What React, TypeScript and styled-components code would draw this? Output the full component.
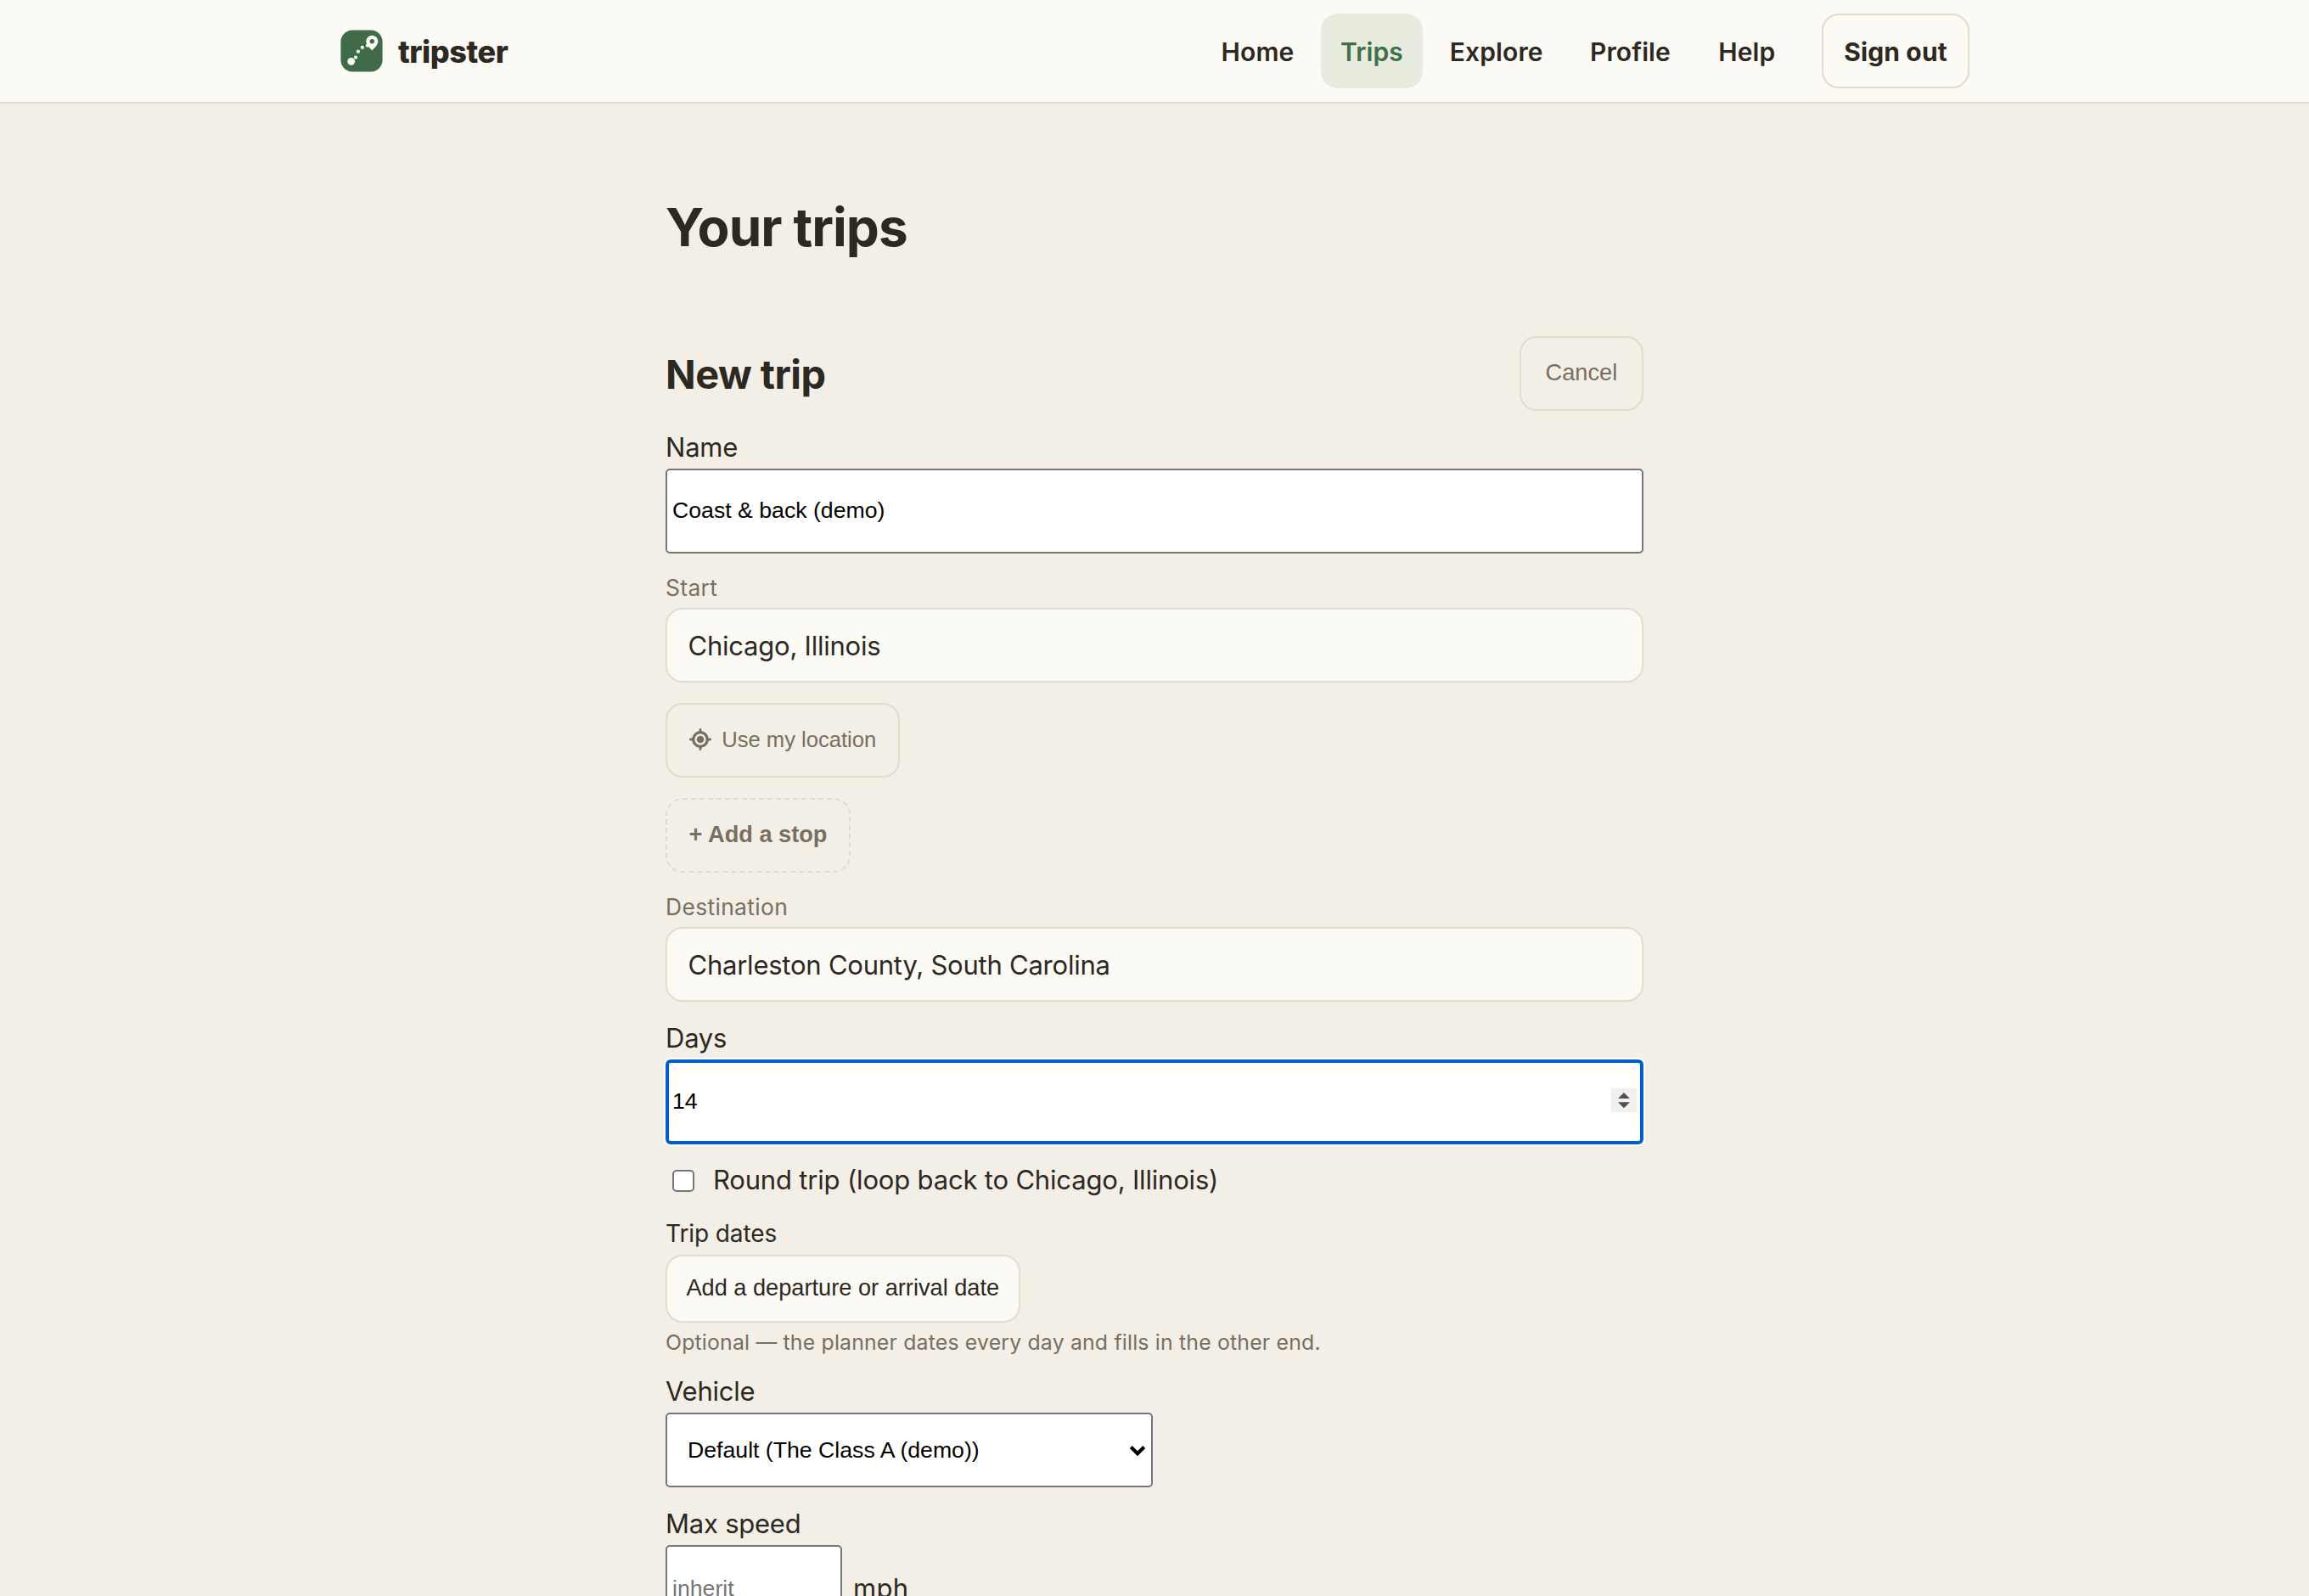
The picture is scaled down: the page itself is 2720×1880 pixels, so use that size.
import styled, { createGlobalStyle, css } from "styled-components";

const GlobalStyle = createGlobalStyle`
  * {
    box-sizing: border-box;
  }

  body {
    margin: 0;
    height: 1880px;
    overflow: hidden;
    background: #f3eee6;
    color: #2c2822;
    font-family: "Inter", sans-serif;
    font-size: 31px;
    letter-spacing: -0.23px;
  }
`;

const Header = styled.header`
  height: 122px;
  background: #fcfaf5;
  border-bottom: 2px solid #e3dccb;
`;

const HeaderInner = styled.div`
  width: 1920px;
  height: 120px;
  margin: 0 auto;
  display: flex;
  align-items: center;
  justify-content: space-between;
`;

const Brand = styled.div`
  display: flex;
  align-items: center;
  gap: 18px;
  padding-left: 1px;
  font-weight: 800;
  font-size: 36px;
  letter-spacing: -0.45px;
`;

const BrandName = styled.span`
  padding-top: 2px;
`;

const Nav = styled.nav`
  display: flex;
  gap: 8px;
  font-size: 30px;
  font-weight: 600;
  letter-spacing: 0.1px;
`;

const NavLink = styled.a<{ $width: number; $active?: boolean }>`
  display: flex;
  align-items: center;
  justify-content: center;
  width: ${({ $width }) => $width}px;
  height: 88px;
  padding-top: 2px;
  border-radius: 20px;
  color: ${({ $active }) => ($active ? "#3f6f4b" : "inherit")};
  background: ${({ $active }) => ($active ? "#e7ecdf" : "transparent")};
`;

const SignOut = styled.button`
  width: 174px;
  height: 88px;
  margin-left: 22px;
  padding: 2px 0 0;
  border: 2px solid #e3dccb;
  border-radius: 20px;
  background: transparent;
  color: inherit;
  font: inherit;
  font-weight: 700;
  letter-spacing: 0.13px;
`;

const Main = styled.main`
  width: 1152px;
  margin: 0 auto;
  padding-top: 108px;
`;

const Title = styled.h1`
  margin: 0 0 90px;
  font-size: 62px;
  line-height: 76px;
  letter-spacing: -0.93px;
`;

const Form = styled.form`
  display: flex;
  flex-direction: column;
  align-items: flex-start;
  gap: 24px;
`;

const FormHeader = styled.div`
  width: 100%;
  display: flex;
  align-items: center;
  justify-content: space-between;
`;

const FormTitle = styled.h2`
  margin: 2px 0 0;
  font-size: 46.8px;
  line-height: 56px;
  letter-spacing: -0.5px;
`;

const Field = styled.div`
  width: 100%;
`;

const Label = styled.div`
  height: 44px;
  line-height: 37.4px;
`;

const MutedLabel = styled.div`
  height: 40px;
  color: #776f60;
  font-size: 26.4px;
  line-height: 32.6px;
  letter-spacing: 0.35px;
`;

const DatesLabel = styled.div`
  height: 44px;
  font-size: 28px;
  line-height: 38px;
  letter-spacing: -0.1px;
`;

const control = css`
  font-family: "Liberation Sans", sans-serif;
  letter-spacing: 0;
`;

const NativeInput = styled.input<{ $width?: number }>`
  ${control}
  display: block;
  width: ${({ $width }) => ($width ? `${$width}px` : "100%")};
  height: 100px;
  padding: 0 6px 1px;
  border: 2px solid #767676;
  border-radius: 5px;
  background: #fff;
  color: #000;
  font-size: 26.67px;
  outline: none;

  &::placeholder {
    color: #757575;
  }
`;

const SpeedInput = styled(NativeInput)`
  padding: 2px 6px 0;
`;

const NumberInput = styled.div`
  ${control}
  display: flex;
  align-items: center;
  justify-content: space-between;
  height: 100px;
  padding: 0 4px;
  border: 4px solid #005fcc;
  border-radius: 6px;
  background: #fff;
  box-shadow: 0 0 0 2px #fff;
  color: #000;
  font-size: 26.67px;
`;

const NumberValue = styled.span`
  padding-bottom: 2px;
`;

const Spinner = styled.span`
  display: flex;
  width: 30px;
  height: 28px;
  margin-bottom: 4px;
  background: #f0f0f0;
`;

const PlaceInput = styled.input`
  display: block;
  width: 100%;
  height: 88px;
  padding: 0 24px 0 24.5px;
  border: 2px solid #e3dccb;
  border-radius: 20px;
  background: #fcfaf5;
  color: inherit;
  font: inherit;
  letter-spacing: inherit;
  outline: none;
`;

const GhostButton = styled.button<{ $size?: number; $pad?: number }>`
  ${control}
  display: flex;
  align-items: center;
  gap: 12.6px;
  height: 88px;
  padding: 0 ${({ $pad = 25.6 }) => $pad}px 2px;
  border: 2px solid #e3dccb;
  border-radius: 20px;
  background: transparent;
  color: #776f60;
  font-size: ${({ $size = 27.2 }) => $size}px;
`;

const AddStop = styled(GhostButton)`
  border-style: dashed;
  font-weight: 700;
`;

const DateButton = styled(GhostButton)`
  height: 80px;
  padding: 0 22.4px 2px;
  background: #fcfaf5;
  color: #2c2822;
`;

const CheckRow = styled.label`
  display: flex;
  align-items: center;
  gap: 22px;
  height: 38px;
  padding-left: 8px;
  line-height: 36px;
  letter-spacing: -0.18px;
`;

const CheckText = styled.span`
  padding-bottom: 2px;
`;

const Checkbox = styled.span`
  width: 26px;
  height: 26px;
  border: 2px solid #767676;
  border-radius: 5px;
  background: #fff;
`;

const Hint = styled.p`
  margin: 0;
  padding-top: 8px;
  color: #776f60;
  font-size: 24.8px;
  line-height: 30px;
  letter-spacing: 0.19px;
`;

const Select = styled.div`
  ${control}
  display: flex;
  align-items: center;
  justify-content: space-between;
  width: 574px;
  height: 88px;
  padding: 1px 6px 0 24px;
  border: 2px solid #767676;
  border-radius: 5px;
  background: #fff;
  color: #000;
  font-size: 26.67px;
`;

const SpeedRow = styled.div`
  display: flex;
  align-items: center;
  gap: 13px;
  letter-spacing: 0.3px;
`;

function Logo() {
  return (
    <svg width="50" height="50" viewBox="0 0 50 50">
      <rect x="0.4" y="0.4" width="49.2" height="49.2" rx="14" fill="#3f6b49" />
      <g fill="#fcfaf5">
        <circle cx="12.7" cy="37.3" r="4.4" />
        <circle cx="18" cy="32.7" r="2.1" />
        <circle cx="20.9" cy="25.7" r="2.1" />
        <circle cx="25.8" cy="20.9" r="2.1" />
        <circle cx="32" cy="18.6" r="2.1" />
        <path d="M37.3 24.4C34.6 21.4 30.3 18 30.3 13.7a7 7 0 0 1 14 0c0 4.3-4.3 7.7-7 10.7z" />
      </g>
      <circle cx="37.3" cy="13.7" r="2.7" fill="#3f6b49" />
    </svg>
  );
}

function LocateIcon() {
  return (
    <svg width="26" height="26" viewBox="0 0 26 26" fill="none" stroke="currentColor" strokeLinecap="round">
      <circle cx="13" cy="13" r="8.3" strokeWidth="3.3" />
      <circle cx="13" cy="13" r="4.3" fill="currentColor" stroke="none" />
      <path d="M13 1.4v3.4M13 21.2v3.4M1.4 13h3.4M21.2 13h3.4" strokeWidth="2.8" />
    </svg>
  );
}

function SpinnerArrows() {
  return (
    <svg width="30" height="28" viewBox="0 0 30 28" fill="#505050">
      <path d="M8 12 15 5l7 7zM8 16.3h14l-7 7z" />
    </svg>
  );
}

function Chevron() {
  return (
    <svg width="20" height="14" viewBox="0 0 20 14" fill="none" stroke="#000" strokeWidth="4.2">
      <path d="M2.3 2.6 10 10.2l7.7-7.6" />
    </svg>
  );
}

const links = [
  { name: "Home", width: 133 },
  { name: "Trips", width: 120, active: true },
  { name: "Explore", width: 157.5 },
  { name: "Profile", width: 142 },
  { name: "Help", width: 116.5 },
];

export default function App() {
  return (
    <>
      <GlobalStyle />
      <Header>
        <HeaderInner>
          <Brand>
            <Logo />
            <BrandName>tripster</BrandName>
          </Brand>
          <Nav>
            {links.map((link) => (
              <NavLink key={link.name} $width={link.width} $active={link.active}>
                {link.name}
              </NavLink>
            ))}
            <SignOut>Sign out</SignOut>
          </Nav>
        </HeaderInner>
      </Header>
      <Main>
        <Title>Your trips</Title>
        <Form>
          <FormHeader>
            <FormTitle>New trip</FormTitle>
            <GhostButton type="button" $pad={28.8}>
              Cancel
            </GhostButton>
          </FormHeader>
          <Field>
            <Label>Name</Label>
            <NativeInput defaultValue="Coast & back (demo)" />
          </Field>
          <Field>
            <MutedLabel>Start</MutedLabel>
            <PlaceInput defaultValue="Chicago, Illinois" />
          </Field>
          <GhostButton type="button" $size={25.6}>
            <LocateIcon />
            Use my location
          </GhostButton>
          <AddStop type="button">+ Add a stop</AddStop>
          <Field>
            <MutedLabel>Destination</MutedLabel>
            <PlaceInput defaultValue="Charleston County, South Carolina" />
          </Field>
          <Field>
            <Label>Days</Label>
            <NumberInput>
              <NumberValue>14</NumberValue>
              <Spinner>
                <SpinnerArrows />
              </Spinner>
            </NumberInput>
          </Field>
          <CheckRow>
            <Checkbox />
            <CheckText>Round trip (loop back to Chicago, Illinois)</CheckText>
          </CheckRow>
          <Field>
            <DatesLabel>Trip dates</DatesLabel>
            <DateButton type="button">Add a departure or arrival date</DateButton>
            <Hint>Optional — the planner dates every day and fills in the other end.</Hint>
          </Field>
          <Field>
            <Label>Vehicle</Label>
            <Select>
              Default (The Class A (demo))
              <Chevron />
            </Select>
          </Field>
          <Field>
            <Label>Max speed</Label>
            <SpeedRow>
              <SpeedInput $width={208} placeholder="inherit" />
              mph
            </SpeedRow>
          </Field>
        </Form>
      </Main>
    </>
  );
}
